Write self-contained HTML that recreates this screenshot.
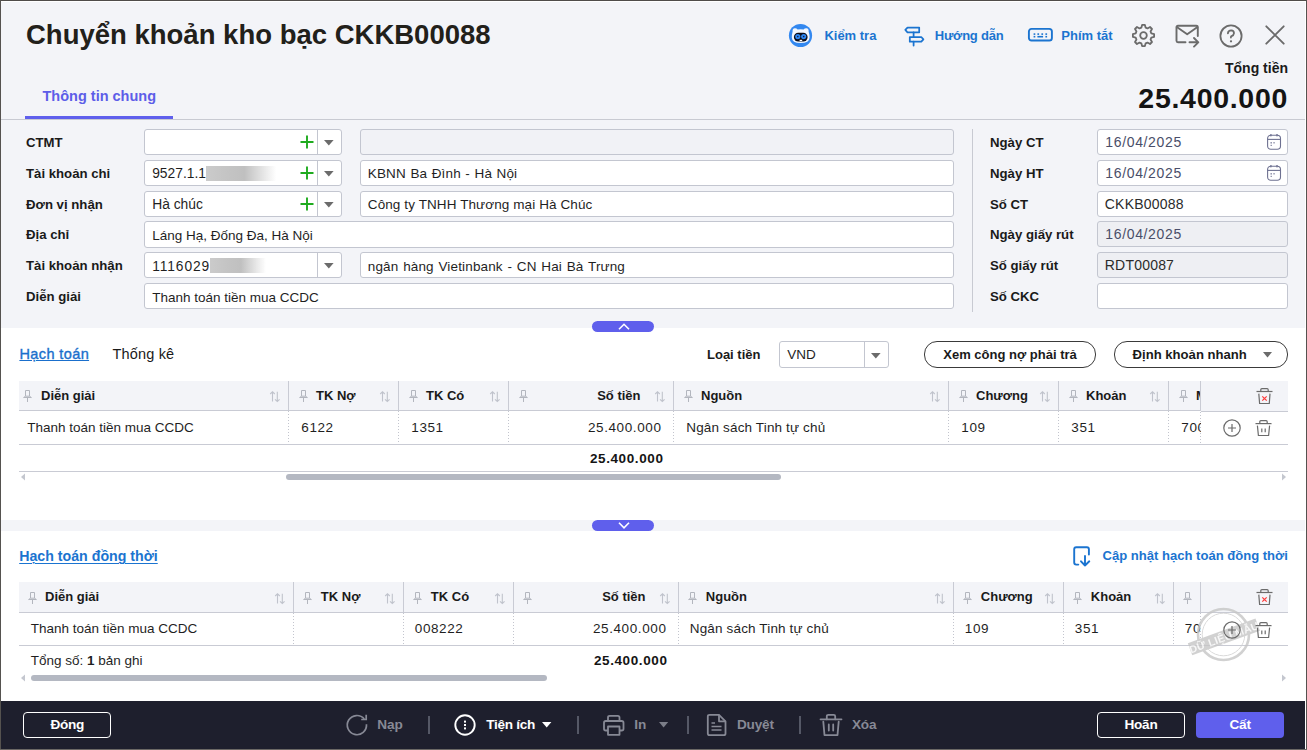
<!DOCTYPE html>
<html><head><meta charset="utf-8"><style>
html,body{margin:0;padding:0;width:1307px;height:750px;overflow:hidden;background:#fff;}
body{position:relative;font-family:"Liberation Sans", sans-serif;}
.t{position:absolute;white-space:nowrap;line-height:1;}
.r{position:absolute;box-sizing:content-box;}
svg.r{overflow:visible;}
</style></head><body>
<div class="r" style="left:0px;top:0px;width:1307px;height:328px;background:#f3f4f8;"></div>
<div class="r" style="left:0px;top:328px;width:1307px;height:192px;background:#ffffff;"></div>
<div class="r" style="left:0px;top:520px;width:1307px;height:11px;background:#f3f4f8;"></div>
<div class="r" style="left:0px;top:531px;width:1307px;height:170px;background:#ffffff;"></div>
<div class="r" style="left:0px;top:701px;width:1307px;height:48px;background:#1e1f2d;"></div>
<div class="t" style="top:20.52px;font-size:27.5px;font-weight:700;color:#22201a;left:26.00px;">Chuyển khoản kho bạc CKKB00088</div>
<div class="t" style="top:88.73px;font-size:14.5px;font-weight:700;color:#5d5de8;left:42.50px;">Thông tin chung</div>
<div class="r" style="left:25px;top:116px;width:148px;height:3px;background:#5f5fec;"></div>
<div class="r" style="left:1px;top:119px;width:1305px;height:1px;background:#c8cad2;"></div>
<div class="t" style="top:60.75px;font-size:14px;font-weight:700;color:#1a1a1a;right:19.00px;">Tổng tiền</div>
<div class="t" style="top:83.87px;font-size:28.5px;font-weight:700;color:#141414;letter-spacing:0.7px;right:19.00px;">25.400.000</div>
<svg class="r" style="left:788px;top:23px;" width="25" height="25" viewBox="0 0 25 25"><circle cx="12.5" cy="12.5" r="11.6" fill="#3388f0"/>
<path d="M4.6 8.5 Q4.2 5.6 6.8 5.3 Q8.6 5.2 9.6 6.6 Q12.6 6.0 15.6 6.6 Q16.6 5.2 18.4 5.3 Q21 5.6 20.6 8.5 Q21.6 11.5 21.6 14.5 Q21.4 20 12.6 20 Q4 20 3.8 14.5 Q3.8 11.5 4.6 8.5Z" fill="#f2f7fe"/>
<rect x="5.9" y="9.8" width="13.7" height="8.6" rx="4.3" fill="#0a0c18"/>
<circle cx="9.8" cy="13.6" r="2.6" fill="#2c86f2"/><circle cx="15.7" cy="13.6" r="2.6" fill="#2c86f2"/>
<circle cx="9.8" cy="13.6" r="0.8" fill="#1a1f3a"/><circle cx="15.7" cy="13.6" r="0.8" fill="#1a1f3a"/>
<rect x="11.6" y="16.8" width="2.6" height="1.2" fill="#ffffff"/></svg>
<div class="t" style="top:28.70px;font-size:13px;font-weight:700;color:#1b74d0;left:824.40px;">Kiểm tra</div>
<svg class="r" style="left:903px;top:25px;" width="23" height="23" viewBox="0 0 23 23"><g fill="none" stroke="#1b74d0" stroke-width="1.75" stroke-linejoin="round" stroke-linecap="round">
<path d="M4.5 2.6 H16.2 V7.3 H4.5 L2.3 4.95 Z"/><path d="M6.8 12.0 H18.3 L20.4 14.35 L18.3 16.7 H6.8 Z"/>
<path d="M10.6 7.3 V12 M10.6 16.7 V20.6"/></g></svg>
<div class="t" style="top:28.70px;font-size:13px;font-weight:700;color:#1b74d0;letter-spacing:-0.2px;left:934.70px;">Hướng dẫn</div>
<svg class="r" style="left:1027px;top:27px;" width="27" height="16" viewBox="0 0 27 16"><rect x="1.9" y="1.9" width="23" height="11.6" rx="2.6" fill="none" stroke="#1b74d0" stroke-width="1.9"/>
<g fill="#1b74d0"><rect x="6.6" y="6.3" width="1.7" height="1.6"/><rect x="10.4" y="6.3" width="1.7" height="1.6"/><rect x="14.4" y="6.3" width="1.7" height="1.6"/><rect x="18.4" y="6.3" width="1.7" height="1.6"/>
<rect x="6.6" y="8.9" width="1.7" height="1.6"/><rect x="10.4" y="8.9" width="5.7" height="1.6"/><rect x="18.4" y="8.9" width="1.7" height="1.6"/></g></svg>
<div class="t" style="top:28.70px;font-size:13px;font-weight:700;color:#1b74d0;left:1061.30px;">Phím tắt</div>
<svg class="r" style="left:1131.5px;top:23.5px;" width="23" height="23" viewBox="0 0 23 23"><path d="M9.34 3.69 L10.10 0.89 L12.90 0.89 L13.66 3.69 L15.49 4.45 L18.01 3.01 L19.99 4.99 L18.55 7.51 L19.31 9.34 L22.11 10.10 L22.11 12.90 L19.31 13.66 L18.55 15.49 L19.99 18.01 L18.01 19.99 L15.49 18.55 L13.66 19.31 L12.90 22.11 L10.10 22.11 L9.34 19.31 L7.51 18.55 L4.99 19.99 L3.01 18.01 L4.45 15.49 L3.69 13.66 L0.89 12.90 L0.89 10.10 L3.69 9.34 L4.45 7.51 L3.01 4.99 L4.99 3.01 L7.51 4.45Z" fill="none" stroke="#6b6b6b" stroke-width="1.8" stroke-linejoin="round"/><circle cx="11.5" cy="11.5" r="3.3" fill="none" stroke="#6b6b6b" stroke-width="1.8"/></svg>
<svg class="r" style="left:1174px;top:24px;" width="27" height="25" viewBox="0 0 27 25"><g fill="none" stroke="#6b6b6b" stroke-width="1.9" stroke-linecap="round" stroke-linejoin="round">
<path d="M11.5 18.3 H4 Q2.5 18.3 2.5 16.8 V3.2 Q2.5 1.8 4 1.8 H22.3 Q23.8 1.8 23.8 3.2 V12"/>
<path d="M2.8 3 L13.2 10.3 L23.5 3"/><path d="M15.5 18.3 H24.3 M20 14 L24.3 18.3 L20 22.6"/></g></svg>
<svg class="r" style="left:1219px;top:24px;" width="25" height="25" viewBox="0 0 25 25"><g fill="none" stroke="#6b6b6b" stroke-width="1.8" stroke-linecap="round"><circle cx="12" cy="12" r="10.6"/>
<path d="M8.9 9.3 Q9.2 6.4 12.2 6.4 Q15 6.6 15 9.2 Q14.9 11.2 12.2 12.3 Q11.9 12.5 11.9 13.6"/></g><circle cx="12" cy="17.3" r="1.15" fill="#6b6b6b"/></svg>
<svg class="r" style="left:1265px;top:25px;" width="20" height="20" viewBox="0 0 20 20"><path d="M1.3 1.3 L18.7 18.7 M18.7 1.3 L1.3 18.7" stroke="#6b6b6b" stroke-width="1.9" stroke-linecap="round"/></svg>
<div class="t" style="top:135.53px;font-size:13.2px;font-weight:700;color:#1a1a1a;left:26.00px;">CTMT</div>
<div class="t" style="top:166.53px;font-size:13.2px;font-weight:700;color:#1a1a1a;left:26.00px;">Tài khoản chi</div>
<div class="t" style="top:197.53px;font-size:13.2px;font-weight:700;color:#1a1a1a;left:26.00px;">Đơn vị nhận</div>
<div class="t" style="top:227.53px;font-size:13.2px;font-weight:700;color:#1a1a1a;left:26.00px;">Địa chỉ</div>
<div class="t" style="top:258.53px;font-size:13.2px;font-weight:700;color:#1a1a1a;left:26.00px;">Tài khoản nhận</div>
<div class="t" style="top:289.53px;font-size:13.2px;font-weight:700;color:#1a1a1a;left:26.00px;">Diễn giải</div>
<div class="r" style="left:144px;top:129px;width:196px;height:24px;background:#fff;border:1px solid #c3c6d0;border-radius:3px;"></div>
<div class="r" style="left:317px;top:130px;width:1px;height:24px;background:#c3c6d0;"></div>
<svg class="r" style="left:324px;top:140px;" width="10" height="6" viewBox="0 0 10 6"><path d="M0 0 H9.6 L4.8 5.5Z" fill="#6b6b6b"/></svg>
<svg class="r" style="left:300px;top:135px;" width="14" height="14" viewBox="0 0 14 14"><path d="M7 0.5 V13.5 M0.5 7 H13.5" stroke="#1fab1f" stroke-width="1.9"/></svg>
<div class="r" style="left:360px;top:129px;width:592px;height:24px;background:#f1f2f6;border:1px solid #c3c6d0;border-radius:3px;"></div>
<div class="r" style="left:144px;top:160px;width:196px;height:24px;background:#fff;border:1px solid #c3c6d0;border-radius:3px;"></div>
<div class="r" style="left:317px;top:161px;width:1px;height:24px;background:#c3c6d0;"></div>
<svg class="r" style="left:324px;top:171px;" width="10" height="6" viewBox="0 0 10 6"><path d="M0 0 H9.6 L4.8 5.5Z" fill="#6b6b6b"/></svg>
<svg class="r" style="left:300px;top:166px;" width="14" height="14" viewBox="0 0 14 14"><path d="M7 0.5 V13.5 M0.5 7 H13.5" stroke="#1fab1f" stroke-width="1.9"/></svg>
<div class="t" style="top:166.92px;font-size:13.8px;font-weight:400;color:#1f1f1f;left:152.20px;">9527.1.1</div>
<div class="r" style="left:360px;top:160px;width:592px;height:24px;background:#fff;border:1px solid #c3c6d0;border-radius:3px;"></div>
<div class="t" style="top:167.17px;font-size:13.5px;font-weight:400;color:#1f1f1f;letter-spacing:0.15px;left:367.80px;word-spacing:0.6px;">KBNN Ba Đình - Hà Nội</div>
<div class="r" style="left:144px;top:191px;width:196px;height:24px;background:#fff;border:1px solid #c3c6d0;border-radius:3px;"></div>
<div class="r" style="left:317px;top:192px;width:1px;height:24px;background:#c3c6d0;"></div>
<svg class="r" style="left:324px;top:202px;" width="10" height="6" viewBox="0 0 10 6"><path d="M0 0 H9.6 L4.8 5.5Z" fill="#6b6b6b"/></svg>
<svg class="r" style="left:300px;top:197px;" width="14" height="14" viewBox="0 0 14 14"><path d="M7 0.5 V13.5 M0.5 7 H13.5" stroke="#1fab1f" stroke-width="1.9"/></svg>
<div class="t" style="top:197.92px;font-size:13.8px;font-weight:400;color:#1f1f1f;left:152.20px;">Hà chúc</div>
<div class="r" style="left:360px;top:191px;width:592px;height:24px;background:#fff;border:1px solid #c3c6d0;border-radius:3px;"></div>
<div class="t" style="top:198.17px;font-size:13.5px;font-weight:400;color:#1f1f1f;letter-spacing:0.1px;left:367.80px;">Công ty TNHH Thương mại Hà Chúc</div>
<div class="r" style="left:144px;top:221px;width:808px;height:25px;background:#fff;border:1px solid #c3c6d0;border-radius:3px;"></div>
<div class="t" style="top:228.97px;font-size:13.5px;font-weight:400;color:#1f1f1f;left:152.20px;">Láng Hạ, Đống Đa, Hà Nội</div>
<div class="r" style="left:144px;top:252px;width:196px;height:24px;background:#fff;border:1px solid #c3c6d0;border-radius:3px;"></div>
<div class="r" style="left:317px;top:253px;width:1px;height:24px;background:#c3c6d0;"></div>
<svg class="r" style="left:324px;top:263px;" width="10" height="6" viewBox="0 0 10 6"><path d="M0 0 H9.6 L4.8 5.5Z" fill="#6b6b6b"/></svg>
<div class="t" style="top:259.72px;font-size:13.8px;font-weight:400;color:#1f1f1f;letter-spacing:0.9px;left:152.20px;">1116029</div>
<div class="r" style="left:360px;top:252px;width:592px;height:24px;background:#fff;border:1px solid #c3c6d0;border-radius:3px;"></div>
<div class="t" style="top:259.97px;font-size:13.5px;font-weight:400;color:#1f1f1f;letter-spacing:0.15px;left:367.80px;word-spacing:0.8px;">ngân hàng Vietinbank - CN Hai Bà Trưng</div>
<div class="r" style="left:144px;top:283px;width:808px;height:24px;background:#fff;border:1px solid #c3c6d0;border-radius:3px;"></div>
<div class="t" style="top:290.97px;font-size:13.5px;font-weight:400;color:#1f1f1f;left:152.20px;">Thanh toán tiền mua CCDC</div>
<div class="r" style="left:206px;top:166px;width:70px;height:15px;background:linear-gradient(90deg,#cbcbcb 0%,#c4c4c4 30%,#c0c0c0 55%,#d8d8d8 72%,rgba(255,255,255,0) 100%);filter:blur(0.6px);"></div>
<div class="r" style="left:210px;top:258px;width:56px;height:15px;background:linear-gradient(90deg,#cbcbcb 0%,#c4c4c4 30%,#c0c0c0 55%,#d8d8d8 72%,rgba(255,255,255,0) 100%);filter:blur(0.6px);"></div>
<div class="r" style="left:972px;top:129px;width:1px;height:183px;background:#c8cad2;"></div>
<div class="t" style="top:135.53px;font-size:13.2px;font-weight:700;color:#1a1a1a;left:990.00px;">Ngày CT</div>
<div class="t" style="top:166.53px;font-size:13.2px;font-weight:700;color:#1a1a1a;left:990.00px;">Ngày HT</div>
<div class="t" style="top:197.53px;font-size:13.2px;font-weight:700;color:#1a1a1a;left:990.00px;">Số CT</div>
<div class="t" style="top:227.53px;font-size:13.2px;font-weight:700;color:#1a1a1a;left:990.00px;">Ngày giấy rút</div>
<div class="t" style="top:258.53px;font-size:13.2px;font-weight:700;color:#1a1a1a;left:990.00px;">Số giấy rút</div>
<div class="t" style="top:289.53px;font-size:13.2px;font-weight:700;color:#1a1a1a;left:990.00px;">Số CKC</div>
<div class="r" style="left:1097px;top:129px;width:189px;height:24px;background:#fff;border:1px solid #c3c6d0;border-radius:3px;"></div>
<div class="t" style="top:135.35px;font-size:14px;font-weight:400;color:#4a4e69;letter-spacing:0.65px;left:1105.30px;">16/04/2025</div>
<svg class="r" style="left:1267px;top:134px;" width="15" height="17" viewBox="0 0 15 17"><g fill="none" stroke="#6e7191" stroke-width="1.1"><rect x="0.6" y="1.3" width="12.9" height="13.9" rx="3.2"/><path d="M0.6 5.4 H13.5"/></g><g fill="#6e7191"><rect x="3.2" y="0" width="1.4" height="2.4" rx="0.6"/><rect x="9.3" y="0" width="1.4" height="2.4" rx="0.6"/><rect x="3.6" y="8" width="1.1" height="1.6"/><rect x="6.4" y="8.2" width="1.3" height="1.2"/><rect x="3.6" y="10.8" width="1.2" height="1.1"/></g></svg>
<div class="r" style="left:1097px;top:160px;width:189px;height:24px;background:#fff;border:1px solid #c3c6d0;border-radius:3px;"></div>
<div class="t" style="top:166.35px;font-size:14px;font-weight:400;color:#4a4e69;letter-spacing:0.65px;left:1105.30px;">16/04/2025</div>
<svg class="r" style="left:1267px;top:165px;" width="15" height="17" viewBox="0 0 15 17"><g fill="none" stroke="#6e7191" stroke-width="1.1"><rect x="0.6" y="1.3" width="12.9" height="13.9" rx="3.2"/><path d="M0.6 5.4 H13.5"/></g><g fill="#6e7191"><rect x="3.2" y="0" width="1.4" height="2.4" rx="0.6"/><rect x="9.3" y="0" width="1.4" height="2.4" rx="0.6"/><rect x="3.6" y="8" width="1.1" height="1.6"/><rect x="6.4" y="8.2" width="1.3" height="1.2"/><rect x="3.6" y="10.8" width="1.2" height="1.1"/></g></svg>
<div class="r" style="left:1097px;top:191px;width:189px;height:24px;background:#fff;border:1px solid #c3c6d0;border-radius:3px;"></div>
<div class="t" style="top:197.35px;font-size:14px;font-weight:400;color:#2b2b2b;letter-spacing:0.2px;left:1104.80px;">CKKB00088</div>
<div class="r" style="left:1097px;top:221px;width:189px;height:24px;background:#eeeff3;border:1px solid #c3c6d0;border-radius:3px;"></div>
<div class="t" style="top:227.35px;font-size:14px;font-weight:400;color:#4a4e69;letter-spacing:0.65px;left:1105.30px;">16/04/2025</div>
<div class="r" style="left:1097px;top:252px;width:189px;height:24px;background:#eeeff3;border:1px solid #c3c6d0;border-radius:3px;"></div>
<div class="t" style="top:258.35px;font-size:14px;font-weight:400;color:#2b2b2b;letter-spacing:0.2px;left:1104.80px;">RDT00087</div>
<div class="r" style="left:1097px;top:283px;width:189px;height:24px;background:#fff;border:1px solid #c3c6d0;border-radius:3px;"></div>
<svg class="r" style="left:592px;top:321px;" width="62" height="11" viewBox="0 0 62 11"><rect width="62" height="11" rx="5.5" fill="#5f5fec"/><path d="M27 8.3 L32 3.3 L37 8.3" fill="none" stroke="#fff" stroke-width="1.6"/></svg>
<div class="t" style="top:347.23px;font-size:14.5px;font-weight:400;color:#1a6fcc;letter-spacing:0.4px;left:19.40px;text-decoration:underline;text-underline-offset:1px;-webkit-text-stroke:0.35px #1a6fcc;">Hạch toán</div>
<div class="t" style="top:347.23px;font-size:14.5px;font-weight:400;color:#1a1a1a;letter-spacing:0.15px;left:112.60px;">Thống kê</div>
<div class="t" style="top:348.00px;font-size:13px;font-weight:700;color:#1a1a1a;left:707.00px;">Loại tiền</div>
<div class="r" style="left:779px;top:341px;width:108px;height:25px;background:#fff;border:1px solid #c3c6d0;border-radius:3px;"></div>
<div class="r" style="left:864px;top:342px;width:1px;height:25px;background:#c3c6d0;"></div>
<svg class="r" style="left:871px;top:352.5px;" width="10" height="6" viewBox="0 0 10 6"><path d="M0 0 H9.6 L4.8 5.5Z" fill="#6b6b6b"/></svg>
<div class="t" style="top:347.87px;font-size:13.5px;font-weight:400;color:#1f1f1f;left:787.20px;">VND</div>
<div class="r" style="left:924px;top:341px;width:170px;height:25px;background:#fff;border:1px solid #3a3a3a;border-radius:13px;"></div>
<div class="t" style="top:347.80px;font-size:13px;font-weight:700;color:#1a1a1a;left:943.30px;">Xem công nợ phải trả</div>
<div class="r" style="left:1114px;top:341px;width:172px;height:25px;background:#fff;border:1px solid #3a3a3a;border-radius:13px;"></div>
<div class="t" style="top:347.71px;font-size:13.1px;font-weight:700;color:#1a1a1a;left:1132.60px;">Định khoản nhanh</div>
<svg class="r" style="left:1263px;top:352px;" width="10" height="6" viewBox="0 0 10 6"><path d="M0 0 H9 L4.5 5.5Z" fill="#6b6b6b"/></svg>
<div class="r" style="left:19px;top:381px;width:1269px;height:29px;background:#f3f4f8;"></div>
<div class="r" style="left:19px;top:410px;width:1269px;height:1px;background:#c9cbd4;"></div>
<div class="r" style="left:19px;top:444px;width:1269px;height:1px;background:#c9cbd4;"></div>
<div class="r" style="left:19px;top:471px;width:1269px;height:1px;background:#c9cbd4;"></div>
<div class="r" style="left:288px;top:381px;width:1px;height:29px;background:#c9cbd4;"></div>
<div class="r" style="left:288px;top:411px;width:1px;height:33px;background:repeating-linear-gradient(180deg,#c3c5ce 0 1px,transparent 1px 3px);"></div>
<div class="r" style="left:398px;top:381px;width:1px;height:29px;background:#c9cbd4;"></div>
<div class="r" style="left:398px;top:411px;width:1px;height:33px;background:repeating-linear-gradient(180deg,#c3c5ce 0 1px,transparent 1px 3px);"></div>
<div class="r" style="left:508px;top:381px;width:1px;height:29px;background:#c9cbd4;"></div>
<div class="r" style="left:508px;top:411px;width:1px;height:33px;background:repeating-linear-gradient(180deg,#c3c5ce 0 1px,transparent 1px 3px);"></div>
<div class="r" style="left:673px;top:381px;width:1px;height:29px;background:#c9cbd4;"></div>
<div class="r" style="left:673px;top:411px;width:1px;height:33px;background:repeating-linear-gradient(180deg,#c3c5ce 0 1px,transparent 1px 3px);"></div>
<div class="r" style="left:948px;top:381px;width:1px;height:29px;background:#c9cbd4;"></div>
<div class="r" style="left:948px;top:411px;width:1px;height:33px;background:repeating-linear-gradient(180deg,#c3c5ce 0 1px,transparent 1px 3px);"></div>
<div class="r" style="left:1058px;top:381px;width:1px;height:29px;background:#c9cbd4;"></div>
<div class="r" style="left:1058px;top:411px;width:1px;height:33px;background:repeating-linear-gradient(180deg,#c3c5ce 0 1px,transparent 1px 3px);"></div>
<div class="r" style="left:1168px;top:381px;width:1px;height:29px;background:#c9cbd4;"></div>
<div class="r" style="left:1168px;top:411px;width:1px;height:33px;background:repeating-linear-gradient(180deg,#c3c5ce 0 1px,transparent 1px 3px);"></div>
<svg class="r" style="left:23px;top:390px;" width="9" height="13" viewBox="0 0 9 13"><g fill="none" stroke="#b3b6be" stroke-width="1"><path d="M2.5 0.5 H6.5 V6.2 H2.5 Z"/><path d="M2.5 6.2 L0.6 7.5 H8.4 L6.5 6.2"/><path d="M4.5 7.5 V12"/></g></svg>
<div class="t" style="top:389.00px;font-size:13px;font-weight:700;color:#1a1a1a;left:41.00px;">Diễn giải</div>
<svg class="r" style="left:270px;top:391px;" width="10" height="12" viewBox="0 0 10 12"><g fill="none" stroke="#c0c3cc" stroke-width="1.1"><path d="M2.5 0.8 V10.5 M0.2 3 L2.5 0.8 L4.8 3"/><path d="M7.3 0.8 V10.5 M5 8.3 L7.3 10.5 L9.6 8.3"/></g></svg>
<svg class="r" style="left:299px;top:390px;" width="9" height="13" viewBox="0 0 9 13"><g fill="none" stroke="#b3b6be" stroke-width="1"><path d="M2.5 0.5 H6.5 V6.2 H2.5 Z"/><path d="M2.5 6.2 L0.6 7.5 H8.4 L6.5 6.2"/><path d="M4.5 7.5 V12"/></g></svg>
<div class="t" style="top:389.00px;font-size:13px;font-weight:700;color:#1a1a1a;left:316.00px;">TK Nợ</div>
<svg class="r" style="left:380px;top:391px;" width="10" height="12" viewBox="0 0 10 12"><g fill="none" stroke="#c0c3cc" stroke-width="1.1"><path d="M2.5 0.8 V10.5 M0.2 3 L2.5 0.8 L4.8 3"/><path d="M7.3 0.8 V10.5 M5 8.3 L7.3 10.5 L9.6 8.3"/></g></svg>
<svg class="r" style="left:409px;top:390px;" width="9" height="13" viewBox="0 0 9 13"><g fill="none" stroke="#b3b6be" stroke-width="1"><path d="M2.5 0.5 H6.5 V6.2 H2.5 Z"/><path d="M2.5 6.2 L0.6 7.5 H8.4 L6.5 6.2"/><path d="M4.5 7.5 V12"/></g></svg>
<div class="t" style="top:389.00px;font-size:13px;font-weight:700;color:#1a1a1a;left:426.00px;">TK Có</div>
<svg class="r" style="left:490px;top:391px;" width="10" height="12" viewBox="0 0 10 12"><g fill="none" stroke="#c0c3cc" stroke-width="1.1"><path d="M2.5 0.8 V10.5 M0.2 3 L2.5 0.8 L4.8 3"/><path d="M7.3 0.8 V10.5 M5 8.3 L7.3 10.5 L9.6 8.3"/></g></svg>
<svg class="r" style="left:519px;top:390px;" width="9" height="13" viewBox="0 0 9 13"><g fill="none" stroke="#b3b6be" stroke-width="1"><path d="M2.5 0.5 H6.5 V6.2 H2.5 Z"/><path d="M2.5 6.2 L0.6 7.5 H8.4 L6.5 6.2"/><path d="M4.5 7.5 V12"/></g></svg>
<div class="t" style="top:389.00px;font-size:13px;font-weight:700;color:#1a1a1a;right:666.50px;">Số tiền</div>
<svg class="r" style="left:655px;top:391px;" width="10" height="12" viewBox="0 0 10 12"><g fill="none" stroke="#c0c3cc" stroke-width="1.1"><path d="M2.5 0.8 V10.5 M0.2 3 L2.5 0.8 L4.8 3"/><path d="M7.3 0.8 V10.5 M5 8.3 L7.3 10.5 L9.6 8.3"/></g></svg>
<svg class="r" style="left:684px;top:390px;" width="9" height="13" viewBox="0 0 9 13"><g fill="none" stroke="#b3b6be" stroke-width="1"><path d="M2.5 0.5 H6.5 V6.2 H2.5 Z"/><path d="M2.5 6.2 L0.6 7.5 H8.4 L6.5 6.2"/><path d="M4.5 7.5 V12"/></g></svg>
<div class="t" style="top:389.00px;font-size:13px;font-weight:700;color:#1a1a1a;left:701.00px;">Nguồn</div>
<svg class="r" style="left:930px;top:391px;" width="10" height="12" viewBox="0 0 10 12"><g fill="none" stroke="#c0c3cc" stroke-width="1.1"><path d="M2.5 0.8 V10.5 M0.2 3 L2.5 0.8 L4.8 3"/><path d="M7.3 0.8 V10.5 M5 8.3 L7.3 10.5 L9.6 8.3"/></g></svg>
<svg class="r" style="left:959px;top:390px;" width="9" height="13" viewBox="0 0 9 13"><g fill="none" stroke="#b3b6be" stroke-width="1"><path d="M2.5 0.5 H6.5 V6.2 H2.5 Z"/><path d="M2.5 6.2 L0.6 7.5 H8.4 L6.5 6.2"/><path d="M4.5 7.5 V12"/></g></svg>
<div class="t" style="top:389.00px;font-size:13px;font-weight:700;color:#1a1a1a;left:976.00px;">Chương</div>
<svg class="r" style="left:1040px;top:391px;" width="10" height="12" viewBox="0 0 10 12"><g fill="none" stroke="#c0c3cc" stroke-width="1.1"><path d="M2.5 0.8 V10.5 M0.2 3 L2.5 0.8 L4.8 3"/><path d="M7.3 0.8 V10.5 M5 8.3 L7.3 10.5 L9.6 8.3"/></g></svg>
<svg class="r" style="left:1069px;top:390px;" width="9" height="13" viewBox="0 0 9 13"><g fill="none" stroke="#b3b6be" stroke-width="1"><path d="M2.5 0.5 H6.5 V6.2 H2.5 Z"/><path d="M2.5 6.2 L0.6 7.5 H8.4 L6.5 6.2"/><path d="M4.5 7.5 V12"/></g></svg>
<div class="t" style="top:389.00px;font-size:13px;font-weight:700;color:#1a1a1a;left:1086.00px;">Khoản</div>
<svg class="r" style="left:1150px;top:391px;" width="10" height="12" viewBox="0 0 10 12"><g fill="none" stroke="#c0c3cc" stroke-width="1.1"><path d="M2.5 0.8 V10.5 M0.2 3 L2.5 0.8 L4.8 3"/><path d="M7.3 0.8 V10.5 M5 8.3 L7.3 10.5 L9.6 8.3"/></g></svg>
<svg class="r" style="left:1179px;top:390px;" width="9" height="13" viewBox="0 0 9 13"><g fill="none" stroke="#b3b6be" stroke-width="1"><path d="M2.5 0.5 H6.5 V6.2 H2.5 Z"/><path d="M2.5 6.2 L0.6 7.5 H8.4 L6.5 6.2"/><path d="M4.5 7.5 V12"/></g></svg>
<div class="t" style="top:389.00px;font-size:13px;font-weight:700;color:#1a1a1a;left:1196.00px;">Mục</div>
<div class="t" style="top:420.87px;font-size:13.5px;font-weight:400;color:#1f1f1f;left:27.20px;">Thanh toán tiền mua CCDC</div>
<div class="t" style="top:420.87px;font-size:13.5px;font-weight:400;color:#1f1f1f;letter-spacing:0.6px;left:301.30px;">6122</div>
<div class="t" style="top:420.87px;font-size:13.5px;font-weight:400;color:#1f1f1f;letter-spacing:0.6px;left:411.30px;">1351</div>
<div class="t" style="top:420.87px;font-size:13.5px;font-weight:400;color:#1f1f1f;letter-spacing:0.6px;right:645.50px;">25.400.000</div>
<div class="t" style="top:420.87px;font-size:13.5px;font-weight:400;color:#1f1f1f;letter-spacing:0.15px;left:686.30px;">Ngân sách Tinh tự chủ</div>
<div class="t" style="top:420.87px;font-size:13.5px;font-weight:400;color:#1f1f1f;letter-spacing:0.6px;left:961.30px;">109</div>
<div class="t" style="top:420.87px;font-size:13.5px;font-weight:400;color:#1f1f1f;letter-spacing:0.6px;left:1071.30px;">351</div>
<div class="t" style="top:420.87px;font-size:13.5px;font-weight:400;color:#1f1f1f;letter-spacing:0.6px;left:1181.30px;">700</div>
<div class="r" style="left:1201px;top:381px;width:87px;height:30px;background:#f3f4f8;"></div>
<div class="r" style="left:1201px;top:411px;width:87px;height:1px;background:#c9cbd4;"></div>
<div class="r" style="left:1201px;top:412px;width:87px;height:32px;background:#fff;"></div>
<div class="r" style="left:1200px;top:381px;width:1px;height:30px;background:#c9cbd4;"></div>
<div class="r" style="left:1200px;top:412px;width:1px;height:32px;background:repeating-linear-gradient(180deg,#c3c5ce 0 1px,transparent 1px 3px);"></div>
<svg class="r" style="left:1255.5px;top:388px;" width="17" height="17" viewBox="0 0 17 17"><g fill="none" stroke="#6b6b6b" stroke-width="1.2"><path d="M0.5 3.5 H16.5"/><path d="M4.8 3.5 V1.7 Q4.8 0.6 5.9 0.6 H11.1 Q12.2 0.6 12.2 1.7 V3.5"/><path d="M2.8 5.6 L3.6 15.5 H13.3 L14 5.6"/></g><path d="M6.3 8.3 L10.7 12.7 M10.7 8.3 L6.3 12.7" stroke="#ff3b3b" stroke-width="1.2"/></svg>
<svg class="r" style="left:1223.2px;top:419px;" width="18" height="18" viewBox="0 0 18 18"><g fill="none" stroke="#6b6b6b" stroke-width="1.2"><circle cx="9" cy="9" r="8.2"/><path d="M9 5 V13 M5 9 H13"/></g></svg>
<svg class="r" style="left:1254.5px;top:419.5px;" width="17" height="17" viewBox="0 0 17 17"><g fill="none" stroke="#6b6b6b" stroke-width="1.2"><path d="M0.5 3.6 H16.5"/><path d="M4.8 3.6 V1.7 Q4.8 0.6 5.9 0.6 H11.1 Q12.2 0.6 12.2 1.7 V3.6"/><path d="M2.4 5.6 L3.4 15.5 H13.6 L14.6 5.6"/><path d="M6.8 8.5 V12.3 M10.2 8.5 V12.3"/></g></svg>
<div class="t" style="top:451.57px;font-size:13.5px;font-weight:700;color:#141414;letter-spacing:0.6px;right:643.50px;">25.400.000</div>
<div class="r" style="left:286px;top:474px;width:495px;height:6px;background:#b4b8c2;border-radius:3px;"></div>
<svg class="r" style="left:20px;top:473px;" width="6" height="8" viewBox="0 0 6 8"><path d="M5 0.5 V7.5 L1 4Z" fill="#c4c7cf"/></svg>
<svg class="r" style="left:1281px;top:473px;" width="6" height="8" viewBox="0 0 6 8"><path d="M1 0.5 V7.5 L5 4Z" fill="#c4c7cf"/></svg>
<svg class="r" style="left:592px;top:520px;" width="62" height="11" viewBox="0 0 62 11"><rect width="62" height="11" rx="5.5" fill="#5f5fec"/><path d="M27 2.8 L32 7.8 L37 2.8" fill="none" stroke="#fff" stroke-width="1.6"/></svg>
<div class="t" style="top:548.98px;font-size:14.2px;font-weight:700;color:#1b74d0;left:19.20px;text-decoration:underline;text-underline-offset:2px;text-decoration-thickness:1px;">Hạch toán đồng thời</div>
<svg class="r" style="left:1072px;top:545px;" width="20" height="23" viewBox="0 0 20 23"><g fill="none" stroke="#1b74d0" stroke-width="1.9" stroke-linecap="round" stroke-linejoin="round"><path d="M6.3 19.6 H4.2 Q2.2 19.6 2.2 17.6 V4.2 Q2.2 2.2 4.2 2.2 H14.9 Q16.9 2.2 16.9 4.2 V9.5"/><path d="M13 11 V20.5 M9 16.3 L13 20.5 L17.3 16.3"/></g></svg>
<div class="t" style="top:548.95px;font-size:13.05px;font-weight:700;color:#1b74d0;right:19.00px;">Cập nhật hạch toán đồng thời</div>
<div class="r" style="left:19px;top:582px;width:1269px;height:30px;background:#f3f4f8;"></div>
<div class="r" style="left:19px;top:612px;width:1269px;height:1px;background:#c9cbd4;"></div>
<div class="r" style="left:19px;top:645px;width:1269px;height:1px;background:#c9cbd4;"></div>
<div class="r" style="left:293px;top:582px;width:1px;height:30px;background:#c9cbd4;"></div>
<div class="r" style="left:293px;top:613px;width:1px;height:32px;background:repeating-linear-gradient(180deg,#c3c5ce 0 1px,transparent 1px 3px);"></div>
<div class="r" style="left:403px;top:582px;width:1px;height:30px;background:#c9cbd4;"></div>
<div class="r" style="left:403px;top:613px;width:1px;height:32px;background:repeating-linear-gradient(180deg,#c3c5ce 0 1px,transparent 1px 3px);"></div>
<div class="r" style="left:513px;top:582px;width:1px;height:30px;background:#c9cbd4;"></div>
<div class="r" style="left:513px;top:613px;width:1px;height:32px;background:repeating-linear-gradient(180deg,#c3c5ce 0 1px,transparent 1px 3px);"></div>
<div class="r" style="left:678px;top:582px;width:1px;height:30px;background:#c9cbd4;"></div>
<div class="r" style="left:678px;top:613px;width:1px;height:32px;background:repeating-linear-gradient(180deg,#c3c5ce 0 1px,transparent 1px 3px);"></div>
<div class="r" style="left:953px;top:582px;width:1px;height:30px;background:#c9cbd4;"></div>
<div class="r" style="left:953px;top:613px;width:1px;height:32px;background:repeating-linear-gradient(180deg,#c3c5ce 0 1px,transparent 1px 3px);"></div>
<div class="r" style="left:1063px;top:582px;width:1px;height:30px;background:#c9cbd4;"></div>
<div class="r" style="left:1063px;top:613px;width:1px;height:32px;background:repeating-linear-gradient(180deg,#c3c5ce 0 1px,transparent 1px 3px);"></div>
<div class="r" style="left:1173px;top:582px;width:1px;height:30px;background:#c9cbd4;"></div>
<div class="r" style="left:1173px;top:613px;width:1px;height:32px;background:repeating-linear-gradient(180deg,#c3c5ce 0 1px,transparent 1px 3px);"></div>
<svg class="r" style="left:28px;top:592px;" width="9" height="13" viewBox="0 0 9 13"><g fill="none" stroke="#b3b6be" stroke-width="1"><path d="M2.5 0.5 H6.5 V6.2 H2.5 Z"/><path d="M2.5 6.2 L0.6 7.5 H8.4 L6.5 6.2"/><path d="M4.5 7.5 V12"/></g></svg>
<div class="t" style="top:589.50px;font-size:13px;font-weight:700;color:#1a1a1a;left:45.00px;">Diễn giải</div>
<svg class="r" style="left:275px;top:593px;" width="10" height="12" viewBox="0 0 10 12"><g fill="none" stroke="#c0c3cc" stroke-width="1.1"><path d="M2.5 0.8 V10.5 M0.2 3 L2.5 0.8 L4.8 3"/><path d="M7.3 0.8 V10.5 M5 8.3 L7.3 10.5 L9.6 8.3"/></g></svg>
<svg class="r" style="left:303px;top:592px;" width="9" height="13" viewBox="0 0 9 13"><g fill="none" stroke="#b3b6be" stroke-width="1"><path d="M2.5 0.5 H6.5 V6.2 H2.5 Z"/><path d="M2.5 6.2 L0.6 7.5 H8.4 L6.5 6.2"/><path d="M4.5 7.5 V12"/></g></svg>
<div class="t" style="top:589.50px;font-size:13px;font-weight:700;color:#1a1a1a;left:320.80px;">TK Nợ</div>
<svg class="r" style="left:385px;top:593px;" width="10" height="12" viewBox="0 0 10 12"><g fill="none" stroke="#c0c3cc" stroke-width="1.1"><path d="M2.5 0.8 V10.5 M0.2 3 L2.5 0.8 L4.8 3"/><path d="M7.3 0.8 V10.5 M5 8.3 L7.3 10.5 L9.6 8.3"/></g></svg>
<svg class="r" style="left:413px;top:592px;" width="9" height="13" viewBox="0 0 9 13"><g fill="none" stroke="#b3b6be" stroke-width="1"><path d="M2.5 0.5 H6.5 V6.2 H2.5 Z"/><path d="M2.5 6.2 L0.6 7.5 H8.4 L6.5 6.2"/><path d="M4.5 7.5 V12"/></g></svg>
<div class="t" style="top:589.50px;font-size:13px;font-weight:700;color:#1a1a1a;left:430.80px;">TK Có</div>
<svg class="r" style="left:495px;top:593px;" width="10" height="12" viewBox="0 0 10 12"><g fill="none" stroke="#c0c3cc" stroke-width="1.1"><path d="M2.5 0.8 V10.5 M0.2 3 L2.5 0.8 L4.8 3"/><path d="M7.3 0.8 V10.5 M5 8.3 L7.3 10.5 L9.6 8.3"/></g></svg>
<svg class="r" style="left:523px;top:592px;" width="9" height="13" viewBox="0 0 9 13"><g fill="none" stroke="#b3b6be" stroke-width="1"><path d="M2.5 0.5 H6.5 V6.2 H2.5 Z"/><path d="M2.5 6.2 L0.6 7.5 H8.4 L6.5 6.2"/><path d="M4.5 7.5 V12"/></g></svg>
<div class="t" style="top:589.50px;font-size:13px;font-weight:700;color:#1a1a1a;right:661.50px;">Số tiền</div>
<svg class="r" style="left:660px;top:593px;" width="10" height="12" viewBox="0 0 10 12"><g fill="none" stroke="#c0c3cc" stroke-width="1.1"><path d="M2.5 0.8 V10.5 M0.2 3 L2.5 0.8 L4.8 3"/><path d="M7.3 0.8 V10.5 M5 8.3 L7.3 10.5 L9.6 8.3"/></g></svg>
<svg class="r" style="left:688px;top:592px;" width="9" height="13" viewBox="0 0 9 13"><g fill="none" stroke="#b3b6be" stroke-width="1"><path d="M2.5 0.5 H6.5 V6.2 H2.5 Z"/><path d="M2.5 6.2 L0.6 7.5 H8.4 L6.5 6.2"/><path d="M4.5 7.5 V12"/></g></svg>
<div class="t" style="top:589.50px;font-size:13px;font-weight:700;color:#1a1a1a;left:705.80px;">Nguồn</div>
<svg class="r" style="left:935px;top:593px;" width="10" height="12" viewBox="0 0 10 12"><g fill="none" stroke="#c0c3cc" stroke-width="1.1"><path d="M2.5 0.8 V10.5 M0.2 3 L2.5 0.8 L4.8 3"/><path d="M7.3 0.8 V10.5 M5 8.3 L7.3 10.5 L9.6 8.3"/></g></svg>
<svg class="r" style="left:963px;top:592px;" width="9" height="13" viewBox="0 0 9 13"><g fill="none" stroke="#b3b6be" stroke-width="1"><path d="M2.5 0.5 H6.5 V6.2 H2.5 Z"/><path d="M2.5 6.2 L0.6 7.5 H8.4 L6.5 6.2"/><path d="M4.5 7.5 V12"/></g></svg>
<div class="t" style="top:589.50px;font-size:13px;font-weight:700;color:#1a1a1a;left:980.80px;">Chương</div>
<svg class="r" style="left:1045px;top:593px;" width="10" height="12" viewBox="0 0 10 12"><g fill="none" stroke="#c0c3cc" stroke-width="1.1"><path d="M2.5 0.8 V10.5 M0.2 3 L2.5 0.8 L4.8 3"/><path d="M7.3 0.8 V10.5 M5 8.3 L7.3 10.5 L9.6 8.3"/></g></svg>
<svg class="r" style="left:1073px;top:592px;" width="9" height="13" viewBox="0 0 9 13"><g fill="none" stroke="#b3b6be" stroke-width="1"><path d="M2.5 0.5 H6.5 V6.2 H2.5 Z"/><path d="M2.5 6.2 L0.6 7.5 H8.4 L6.5 6.2"/><path d="M4.5 7.5 V12"/></g></svg>
<div class="t" style="top:589.50px;font-size:13px;font-weight:700;color:#1a1a1a;left:1090.80px;">Khoản</div>
<svg class="r" style="left:1155px;top:593px;" width="10" height="12" viewBox="0 0 10 12"><g fill="none" stroke="#c0c3cc" stroke-width="1.1"><path d="M2.5 0.8 V10.5 M0.2 3 L2.5 0.8 L4.8 3"/><path d="M7.3 0.8 V10.5 M5 8.3 L7.3 10.5 L9.6 8.3"/></g></svg>
<svg class="r" style="left:1183px;top:592px;" width="9" height="13" viewBox="0 0 9 13"><g fill="none" stroke="#b3b6be" stroke-width="1"><path d="M2.5 0.5 H6.5 V6.2 H2.5 Z"/><path d="M2.5 6.2 L0.6 7.5 H8.4 L6.5 6.2"/><path d="M4.5 7.5 V12"/></g></svg>
<div class="t" style="top:589.50px;font-size:13px;font-weight:700;color:#1a1a1a;left:1200.80px;">Mục</div>
<div class="t" style="top:621.87px;font-size:13.5px;font-weight:400;color:#1f1f1f;left:30.70px;">Thanh toán tiền mua CCDC</div>
<div class="t" style="top:621.87px;font-size:13.5px;font-weight:400;color:#1f1f1f;letter-spacing:0.6px;left:414.80px;">008222</div>
<div class="t" style="top:621.87px;font-size:13.5px;font-weight:400;color:#1f1f1f;letter-spacing:0.6px;right:640.50px;">25.400.000</div>
<div class="t" style="top:621.87px;font-size:13.5px;font-weight:400;color:#1f1f1f;letter-spacing:0.15px;left:689.80px;">Ngân sách Tinh tự chủ</div>
<div class="t" style="top:621.87px;font-size:13.5px;font-weight:400;color:#1f1f1f;letter-spacing:0.6px;left:964.80px;">109</div>
<div class="t" style="top:621.87px;font-size:13.5px;font-weight:400;color:#1f1f1f;letter-spacing:0.6px;left:1074.80px;">351</div>
<div class="t" style="top:621.87px;font-size:13.5px;font-weight:400;color:#1f1f1f;letter-spacing:0.6px;left:1184.80px;">700</div>
<div class="r" style="left:1201px;top:582px;width:87px;height:30px;background:#f3f4f8;"></div>
<div class="r" style="left:1201px;top:612px;width:87px;height:1px;background:#c9cbd4;"></div>
<div class="r" style="left:1201px;top:613px;width:87px;height:32px;background:#fff;"></div>
<div class="r" style="left:1200px;top:582px;width:1px;height:30px;background:#c9cbd4;"></div>
<div class="r" style="left:1200px;top:613px;width:1px;height:32px;background:repeating-linear-gradient(180deg,#c3c5ce 0 1px,transparent 1px 3px);"></div>
<svg class="r" style="left:1186px;top:597px;" width="75" height="75" viewBox="0 0 75 75"><g opacity="0.8"><circle cx="37.5" cy="37.5" r="25.5" fill="none" stroke="#c6c6c6" stroke-width="2.6"/>
<circle cx="37.5" cy="37.5" r="21.3" fill="none" stroke="#d0d0d0" stroke-width="1"/>
<g transform="rotate(-20 37.5 39)"><rect x="1.5" y="33.5" width="72" height="13" fill="#c6c6c6"/>
<text x="37.5" y="44.3" text-anchor="middle" font-family="Liberation Sans" font-weight="700" font-size="10.5" fill="#f6f6f6" letter-spacing="0.3">DỮ LIỆU MẪU</text></g></g></svg>
<svg class="r" style="left:1255.5px;top:589px;" width="17" height="17" viewBox="0 0 17 17"><g fill="none" stroke="#6b6b6b" stroke-width="1.2"><path d="M0.5 3.5 H16.5"/><path d="M4.8 3.5 V1.7 Q4.8 0.6 5.9 0.6 H11.1 Q12.2 0.6 12.2 1.7 V3.5"/><path d="M2.8 5.6 L3.6 15.5 H13.3 L14 5.6"/></g><path d="M6.3 8.3 L10.7 12.7 M10.7 8.3 L6.3 12.7" stroke="#ff3b3b" stroke-width="1.2"/></svg>
<svg class="r" style="left:1223.2px;top:621px;" width="18" height="18" viewBox="0 0 18 18"><g fill="none" stroke="#6b6b6b" stroke-width="1.2"><circle cx="9" cy="9" r="8.2"/><path d="M9 5 V13 M5 9 H13"/></g></svg>
<svg class="r" style="left:1254.5px;top:621.5px;" width="17" height="17" viewBox="0 0 17 17"><g fill="none" stroke="#6b6b6b" stroke-width="1.2"><path d="M0.5 3.6 H16.5"/><path d="M4.8 3.6 V1.7 Q4.8 0.6 5.9 0.6 H11.1 Q12.2 0.6 12.2 1.7 V3.6"/><path d="M2.4 5.6 L3.4 15.5 H13.6 L14.6 5.6"/><path d="M6.8 8.5 V12.3 M10.2 8.5 V12.3"/></g></svg>
<div class="t" style="top:654.07px;font-size:13.5px;font-weight:700;color:#141414;letter-spacing:0.6px;right:639.50px;">25.400.000</div>
<div class="t" style="top:653.57px;font-size:13.5px;font-weight:400;color:#1f1f1f;left:30.70px;">Tổng số: <b>1</b> bản ghi</div>
<div class="r" style="left:31px;top:675px;width:516px;height:6px;background:#b4b8c2;border-radius:3px;"></div>
<svg class="r" style="left:20px;top:674px;" width="6" height="8" viewBox="0 0 6 8"><path d="M5 0.5 V7.5 L1 4Z" fill="#c4c7cf"/></svg>
<svg class="r" style="left:1281px;top:674px;" width="6" height="8" viewBox="0 0 6 8"><path d="M1 0.5 V7.5 L5 4Z" fill="#c4c7cf"/></svg>
<div class="r" style="left:23px;top:712px;width:86px;height:24px;background:none;border:1px solid #ffffff;border-radius:4px;"></div>
<div class="t" style="top:718.09px;font-size:13.6px;font-weight:700;color:#fff;letter-spacing:-0.25px;left:50.40px;">Đóng</div>
<svg class="r" style="left:346px;top:714px;" width="22" height="22" viewBox="0 0 22 22"><g fill="none" stroke="#878995" stroke-width="1.7" stroke-linecap="butt"><path d="M20.46 10.26 A9.6 9.6 0 1 1 18.25 4.93"/><path d="M20.2 0.7 V5.5 H15.2"/></g></svg>
<div class="t" style="top:718.09px;font-size:13.6px;font-weight:700;color:#878995;left:377.20px;">Nạp</div>
<div class="r" style="left:428px;top:716px;width:2px;height:18px;background:#555866;"></div>
<svg class="r" style="left:454px;top:714px;" width="22" height="22" viewBox="0 0 22 22"><circle cx="11" cy="11" r="9.7" fill="none" stroke="#fff" stroke-width="1.9"/><g fill="#fff"><rect x="10" y="6.6" width="2" height="2"/><rect x="10" y="10" width="2" height="2"/><rect x="10" y="13.4" width="2" height="2"/></g></svg>
<div class="t" style="top:718.09px;font-size:13.6px;font-weight:700;color:#fff;letter-spacing:-0.3px;left:486.20px;">Tiện ích</div>
<svg class="r" style="left:542px;top:722px;" width="10" height="6" viewBox="0 0 10 6"><path d="M0 0 H9.4 L4.7 5.5Z" fill="#fff"/></svg>
<div class="r" style="left:577px;top:716px;width:2px;height:18px;background:#555866;"></div>
<svg class="r" style="left:602px;top:714px;" width="24" height="23" viewBox="0 0 24 23"><g fill="none" stroke="#878995" stroke-width="1.8" stroke-linejoin="round"><path d="M6 7 V3.5 Q6 1.8 7.7 1.8 H15.8 Q17.5 1.8 17.5 3.5 V7"/><path d="M6 16.5 H3.8 Q2 16.5 2 14.7 V8.8 Q2 7 3.8 7 H19.7 Q21.5 7 21.5 8.8 V14.7 Q21.5 16.5 19.7 16.5 H17.5"/><path d="M6 12.5 H17.5 V20.8 H6 Z"/></g></svg>
<div class="t" style="top:718.09px;font-size:13.6px;font-weight:700;color:#878995;left:634.30px;">In</div>
<svg class="r" style="left:659px;top:722px;" width="10" height="6" viewBox="0 0 10 6"><path d="M0 0 H9.2 L4.6 5.5Z" fill="#7b7d88"/></svg>
<div class="r" style="left:687px;top:716px;width:2px;height:18px;background:#555866;"></div>
<svg class="r" style="left:706px;top:713px;" width="22" height="24" viewBox="0 0 22 24"><g fill="none" stroke="#878995" stroke-width="1.8" stroke-linejoin="round"><path d="M3.5 1.8 H13 L19.5 8.3 V20.5 Q19.5 22.2 17.8 22.2 H3.5 Q1.8 22.2 1.8 20.5 V3.5 Q1.8 1.8 3.5 1.8Z"/><path d="M13 1.8 V8.3 H19.5"/><path d="M5.5 10 H9 M5.5 13.5 H15.5 M5.5 17 H15.5" stroke-width="1.4"/></g></svg>
<div class="t" style="top:718.09px;font-size:13.6px;font-weight:700;color:#878995;letter-spacing:-0.2px;left:737.00px;">Duyệt</div>
<div class="r" style="left:799px;top:716px;width:2px;height:18px;background:#555866;"></div>
<svg class="r" style="left:819px;top:713px;" width="24" height="24" viewBox="0 0 24 24"><g fill="none" stroke="#878995" stroke-width="1.8" stroke-linejoin="round" stroke-linecap="round"><path d="M1.5 6.3 H22.5"/><path d="M7.8 6.3 V3.3 Q7.8 1.8 9.3 1.8 H14.7 Q16.2 1.8 16.2 3.3 V6.3"/><path d="M4.3 8.6 L5.5 22.2 H18.5 L19.7 8.6"/><path d="M9.8 11.5 V17.5 M14.2 11.5 V17.5"/></g></svg>
<div class="t" style="top:718.09px;font-size:13.6px;font-weight:700;color:#878995;letter-spacing:-0.2px;left:852.00px;">Xóa</div>
<div class="r" style="left:1097px;top:712px;width:86px;height:24px;background:none;border:1px solid #ffffff;border-radius:4px;"></div>
<div class="t" style="top:718.09px;font-size:13.6px;font-weight:700;color:#fff;letter-spacing:-0.25px;left:1124.50px;">Hoãn</div>
<div class="r" style="left:1196px;top:712px;width:88px;height:26px;background:#5f5fec;border-radius:4px;"></div>
<div class="t" style="top:718.09px;font-size:13.6px;font-weight:700;color:#fff;letter-spacing:-0.2px;left:1229.50px;">Cất</div>
<div class="r" style="left:0px;top:0px;width:1307px;height:1px;background:#4f4c49;"></div>
<div class="r" style="left:1px;top:1px;width:1305px;height:1px;background:#ffffff;"></div>
<div class="r" style="left:0px;top:0px;width:1px;height:750px;background:#55524f;"></div>
<div class="r" style="left:1305px;top:1px;width:1px;height:748px;background:#ffffff;"></div>
<div class="r" style="left:1306px;top:0px;width:1px;height:750px;background:#55524f;"></div>
<div class="r" style="left:0px;top:749px;width:1307px;height:1px;background:#6b6865;"></div>
</body></html>
